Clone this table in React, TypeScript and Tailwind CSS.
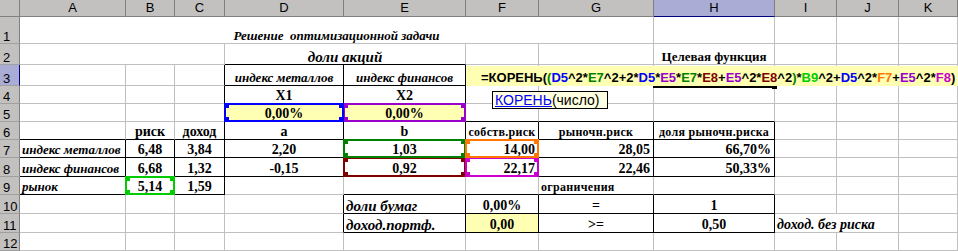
import type { ReactNode } from 'react'

const cols = ['A', 'B', 'C', 'D', 'E', 'F', 'G', 'H', 'I', 'J', 'K']
const rows = [1, 2, 3, 4, 5, 6, 7, 8, 9, 10, 11, 12]

type Cell = { t?: ReactNode; cls?: string; span?: number }

const spanCls: Record<number, string> = { 2: 'col-span-2', 3: 'col-span-3', 7: 'col-span-7' }

const cells: Record<string, Cell> = {
  A1: { t: 'Решение  оптимизационной задачи', cls: 'justify-center font-bold italic text-[13px]', span: 7 },
  A2: { span: 3 },
  D2: { t: 'доли акций', cls: 'justify-center font-bold italic text-[15px]', span: 2 },
  H2: { t: 'Целевая функция', cls: 'justify-center font-bold text-[13px]' },
  D3: { t: 'индекс металлов', cls: 'justify-center font-bold italic text-[13px]' },
  E3: { t: 'индекс финансов', cls: 'justify-center font-bold italic text-[13px]' },
  D4: { t: 'X1', cls: 'justify-center font-bold text-[14px]' },
  E4: { t: 'X2', cls: 'justify-center font-bold text-[14px]' },
  D5: { t: '0,00%', cls: 'justify-center font-bold text-[14px] bg-[#ffffb3]' },
  E5: { t: '0,00%', cls: 'justify-center font-bold text-[14px] bg-[#ffffb3]' },
  B6: { t: 'риск', cls: 'justify-center font-bold text-[14px]' },
  C6: { t: 'доход', cls: 'justify-center font-bold text-[14px]' },
  D6: { t: 'a', cls: 'justify-center font-bold text-[14px]' },
  E6: { t: 'b', cls: 'justify-center font-bold text-[14px]' },
  F6: { t: 'собств.риск', cls: 'justify-center font-bold text-[12px] tracking-[0.3px]' },
  G6: { t: 'рыночн.риск', cls: 'justify-center font-bold text-[12px] tracking-[0.3px]' },
  H6: { t: 'доля рыночн.риска', cls: 'justify-center font-bold text-[12px] tracking-[0.3px]' },
  A7: { t: 'индекс металлов', cls: 'justify-start pl-[2px] font-bold italic text-[13px]' },
  B7: { t: '6,48', cls: 'justify-center font-bold text-[14px]' },
  C7: { t: '3,84', cls: 'justify-center font-bold text-[14px]' },
  D7: { t: '2,20', cls: 'justify-center font-bold text-[14px]' },
  E7: { t: '1,03', cls: 'justify-center font-bold text-[14px]' },
  F7: { t: '14,00', cls: 'justify-end pr-[3px] font-bold text-[14px]' },
  G7: { t: '28,05', cls: 'justify-end pr-[3px] font-bold text-[14px]' },
  H7: { t: '66,70%', cls: 'justify-end pr-[3px] font-bold text-[14px]' },
  A8: { t: 'индекс финансов', cls: 'justify-start pl-[2px] font-bold italic text-[13px]' },
  B8: { t: '6,68', cls: 'justify-center font-bold text-[14px]' },
  C8: { t: '1,32', cls: 'justify-center font-bold text-[14px]' },
  D8: { t: '-0,15', cls: 'justify-center font-bold text-[14px]' },
  E8: { t: '0,92', cls: 'justify-center font-bold text-[14px]' },
  F8: { t: '22,17', cls: 'justify-end pr-[3px] font-bold text-[14px]' },
  G8: { t: '22,46', cls: 'justify-end pr-[3px] font-bold text-[14px]' },
  H8: { t: '50,33%', cls: 'justify-end pr-[3px] font-bold text-[14px]' },
  A9: { t: 'рынок', cls: 'justify-start pl-[2px] font-bold italic text-[13px]' },
  B9: { t: '5,14', cls: 'justify-center font-bold text-[14px]' },
  C9: { t: '1,59', cls: 'justify-center font-bold text-[14px]' },
  G9: { t: 'ограничения', cls: 'justify-start pl-[2px] font-bold text-[12px] tracking-[0.3px]' },
  E10: { t: 'доли бумаг', cls: 'justify-start pl-[2px] font-bold italic text-[15px]' },
  F10: { t: '0,00%', cls: 'justify-center font-bold text-[14px]' },
  G10: { t: '=', cls: 'justify-center font-bold text-[14px]' },
  H10: { t: '1', cls: 'justify-center font-bold text-[14px]' },
  E11: { t: 'доход.портф.', cls: 'justify-start pl-[2px] font-bold italic text-[15px]' },
  F11: { t: '0,00', cls: 'justify-center font-bold text-[14px] bg-[#ffffb3]' },
  G11: { t: '>=', cls: 'justify-center font-bold text-[14px]' },
  H11: { t: '0,50', cls: 'justify-center font-bold text-[14px]' },
  I11: { t: 'доход. без риска', cls: 'justify-start pl-[2px] font-bold italic text-[14px]', span: 2 },
}

const blackR = new Set([
  'C3', 'D3', 'E3', 'C4', 'D4', 'E4', 'C5', 'D5', 'E5',
  'C6', 'D6', 'E6', 'F6', 'G6', 'H6',
  'A7', 'B7', 'C7', 'D7', 'E7', 'F7', 'G7', 'H7',
  'A8', 'B8', 'C8', 'D8', 'E8', 'F8', 'G8', 'H8',
  'A9', 'B9', 'C9',
  'D10', 'E10', 'F10', 'G10', 'H10',
  'D11', 'E11', 'F11', 'G11', 'H11',
])

const blackB = new Set([
  'D2', 'D3', 'E3', 'D4', 'E4', 'D5', 'E5', 'F5', 'G5', 'H5',
  'A6', 'B6', 'C6', 'D6', 'E6', 'F6', 'G6', 'H6',
  'A7', 'B7', 'C7', 'D7', 'E7', 'F7', 'G7', 'H7',
  'A8', 'B8', 'C8', 'D8', 'E8', 'F8', 'G8', 'H8',
  'A9', 'B9', 'C9', 'E9', 'F9', 'G9', 'H9',
  'E10', 'F10', 'G10', 'H10',
  'E11', 'F11', 'G11', 'H11',
])

// range finder colours for the cells the formula refers to
const ranges: Record<string, string> = {
  D5: 'text-[#0000ff] z-30',
  E5: 'text-[#9900cc] z-20',
  E7: 'text-[#008000] z-20',
  E8: 'text-[#800000] z-10',
  F7: 'text-[#ff7700] z-20',
  F8: 'text-[#cc00cc] z-10',
  B9: 'text-[#00cc00] z-10',
}

const formula: [string, string][] = [
  ['=КОРЕНЬ(', 'text-black'], ['(', 'text-[#008000]'], ['D5', 'text-[#0000ff]'], ['^2*', 'text-black'],
  ['E7', 'text-[#008000]'], ['^2+2*', 'text-black'], ['D5', 'text-[#0000ff]'], ['*', 'text-black'],
  ['E5', 'text-[#9900cc]'], ['*', 'text-black'], ['E7', 'text-[#008000]'], ['*', 'text-black'],
  ['E8', 'text-[#800000]'], ['+', 'text-black'], ['E5', 'text-[#9900cc]'], ['^2*', 'text-black'],
  ['E8', 'text-[#800000]'], ['^2', 'text-black'], [')', 'text-[#008000]'], ['*', 'text-black'],
  ['B9', 'text-[#00cc00]'], ['^2+', 'text-black'], ['D5', 'text-[#0000ff]'], ['^2*', 'text-black'],
  ['F7', 'text-[#ff7700]'], ['+', 'text-black'], ['E5', 'text-[#9900cc]'], ['^2*', 'text-black'],
  ['F8', 'text-[#cc00cc]'], [')', 'text-black'],
]

function RangeBox({ cls }: { cls: string }) {
  return (
    <div className={`absolute -inset-[1px] border-2 border-current ${cls}`}>
      <span className="absolute -left-[2px] -top-[2px] size-[5px] bg-current" />
      <span className="absolute -right-[2px] -top-[2px] size-[5px] bg-current" />
      <span className="absolute -left-[2px] -bottom-[2px] size-[5px] bg-current" />
      <span className="absolute -right-[2px] -bottom-[2px] size-[5px] bg-current" />
    </div>
  )
}

// in-cell editor opened on F3, spilling over to the right edge
function Editor() {
  return (
    <div className="absolute left-0 top-[1px] z-40 w-[492px] h-[20px] flex items-end pl-[15px] bg-[#ffffb3] whitespace-pre font-['Liberation_Sans',sans-serif] font-bold text-[13px] leading-[16px]">
      {formula.map(([s, color], i) => (
        <span key={i} className={color}>
          {s}
        </span>
      ))}
    </div>
  )
}

function FuncTip() {
  return (
    <div className="absolute left-[26px] top-[5px] z-40 w-[116px] h-[18px] flex items-center pl-[2px] bg-[#ffffe1] border border-black font-['Liberation_Sans',sans-serif] text-[14px] leading-[16px] whitespace-pre">
      <span className="text-[#0000ff] underline">КОРЕНЬ</span>
      <span>(число)</span>
    </div>
  )
}

function ActiveCell() {
  return (
    <>
      <div className="absolute -left-[1px] -right-[1px] -bottom-[3px] z-30 h-[2px] bg-black" />
      <div className="absolute -right-[3px] -bottom-[4px] z-30 size-[5px] bg-black" />
    </>
  )
}

export default function App() {
  const covered = new Set<string>()
  rows.forEach((r) =>
    cols.forEach((c, i) => {
      const span = cells[c + r]?.span
      if (span) for (let k = 1; k < span; k++) covered.add(cols[i + k] + r)
    })
  )

  return (
    <div className="grid w-[958px] h-[251px] overflow-hidden bg-white font-['Liberation_Serif',serif] text-black grid-cols-[20px_106px_49px_50px_119px_122px_73px_115px_121px_62px_62px_59px] grid-rows-[17px_27px_21px_21px_18px_18px_18px_18px_19px_18px_19px_19px_18px]">
      {/* column headers */}
      <div className="bg-[#c3c0c0] border-r border-b border-[#808080]" />
      {cols.map((c) => (
        <div
          key={c}
          className={`flex items-center justify-center border-r border-b font-['Liberation_Sans',sans-serif] text-[13px] leading-[14px] ${
            c === 'H' ? 'bg-[#aaacd6] border-r-[#808080] border-b-[#000080]' : 'bg-[#c3c0c0] border-[#808080]'
          }`}
        >
          {c}
        </div>
      ))}

      {rows.map((r) => (
        <div key={r} className="contents">
          <div
            className={`flex items-end pl-[3px] border-r border-b font-['Liberation_Sans',sans-serif] text-[13px] leading-[12px] ${
              r === 3 ? 'bg-[#aaacd6] border-r-[#000080] border-b-[#a0a0a0]' : 'bg-[#c3c0c0] border-r-[#808080] border-b-[#a0a0a0]'
            }`}
          >
            {r}
          </div>
          {cols.map((c, i) => {
            const key = c + r
            if (covered.has(key)) return null
            const cell = cells[key] ?? {}
            const lastCol = cols[i + (cell.span ?? 1) - 1] + r
            return (
              <div
                key={key}
                className={`relative flex items-end whitespace-pre border-r border-b leading-[14px] ${
                  blackR.has(lastCol) ? 'border-r-black' : 'border-r-[#c0c0c0]'
                } ${blackB.has(key) ? 'border-b-black' : 'border-b-[#c0c0c0]'} ${cell.span ? spanCls[cell.span] : ''} ${
                  cell.cls ?? ''
                }`}
              >
                {cell.t}
                {ranges[key] && <RangeBox cls={ranges[key]} />}
                {key === 'F3' && <Editor />}
                {key === 'F4' && <FuncTip />}
                {key === 'H3' && <ActiveCell />}
              </div>
            )
          })}
        </div>
      ))}
    </div>
  )
}
